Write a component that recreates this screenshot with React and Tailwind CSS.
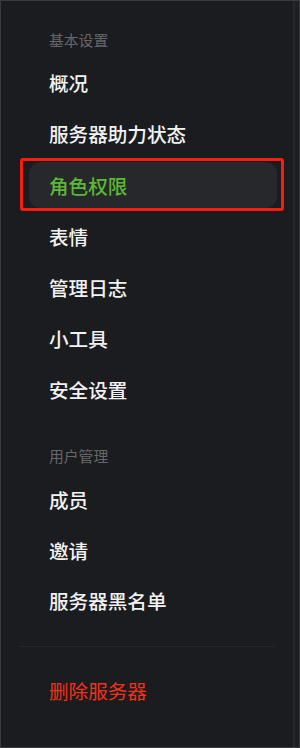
import React from 'react';

const basic = ['概况', '服务器助力状态', '角色权限', '表情', '管理日志', '小工具', '安全设置'];
const users = ['成员', '邀请', '服务器黑名单'];

function Item({ label, active }) {
  if (active) {
    return (
      <div className="relative">
        <div className="flex h-[46px] items-center rounded-[12px] bg-[#27282c] pl-[20px] text-[19.6px] font-medium text-[#5cb934]">
          {label}
        </div>
        <div className="pointer-events-none absolute -bottom-[3px] -left-[9px] -right-[7px] -top-[4px] rounded-[3px] border-[3px] border-[#fa1d0f]" />
      </div>
    );
  }
  return (
    <div className="flex h-[46px] items-center pl-[20px] text-[19.6px] font-medium text-[#f2f2f3]">{label}</div>
  );
}

export default function App() {
  return (
    <div
      className="flex h-[748px] w-[300px] border border-[#3a3b3e] bg-[#1b1c1f]"
      style={{ fontFamily: '"Noto Sans CJK SC", "Noto Sans", sans-serif' }}
    >
      <nav className="flex-1 pl-[28px] pr-[16px]">
        <p className="mt-[29px] pl-[20px] text-[14.8px] leading-[20px] text-[#66676b]">基本设置</p>
        <div className="mt-[10px] flex flex-col gap-[5.2px]">
          {basic.map((label) => (
            <Item key={label} label={label} active={label === '角色权限'} />
          ))}
        </div>

        <p className="mt-[33px] pl-[20px] text-[14.8px] leading-[20px] text-[#66676b]">用户管理</p>
        <div className="mt-[11px] flex flex-col gap-[4.5px]">
          {users.map((label) => (
            <Item key={label} label={label} />
          ))}
        </div>

        <div className="-ml-[9px] mr-[2px] mt-[22px] border-t border-[#26272a]" />

        <div className="mt-[21px] flex h-[46px] items-center pl-[20px] text-[19.6px] text-[#f0321a]">删除服务器</div>
      </nav>
      <div className="w-[6px] border-l-2 border-[#26272a] bg-[#1e1f22]" />
    </div>
  );
}
